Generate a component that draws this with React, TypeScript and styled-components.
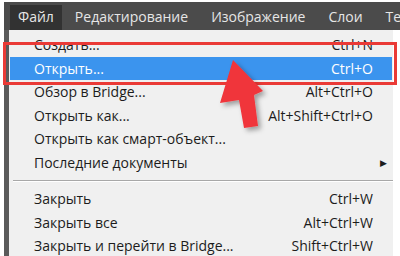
import { FunctionComponent } from "react";
import styled, { createGlobalStyle } from "styled-components";

type Entry =
  | { kind: "item"; label: string; shortcut?: string; submenu?: boolean; active?: boolean }
  | { kind: "separator" };

const menuTitles = ["Файл", "Редактирование", "Изображение", "Слои", "Текст"];

const entries: Entry[] = [
  { kind: "item", label: "Создать...", shortcut: "Ctrl+N" },
  { kind: "item", label: "Открыть...", shortcut: "Ctrl+O", active: true },
  { kind: "item", label: "Обзор в Bridge...", shortcut: "Alt+Ctrl+O" },
  { kind: "item", label: "Открыть как...", shortcut: "Alt+Shift+Ctrl+O" },
  { kind: "item", label: "Открыть как смарт-объект..." },
  { kind: "item", label: "Последние документы", submenu: true },
  { kind: "separator" },
  { kind: "item", label: "Закрыть", shortcut: "Ctrl+W" },
  { kind: "item", label: "Закрыть все", shortcut: "Alt+Ctrl+W" },
  { kind: "item", label: "Закрыть и перейти в Bridge...", shortcut: "Shift+Ctrl+W" },
];

const App: FunctionComponent = () => {
  return (
    <>
      <GlobalStyle />
      <Screen>
        <MenuBar>
          {menuTitles.map((t, i) => (
            <MenuTitle key={t} open={i === 0}>{t}</MenuTitle>
          ))}
        </MenuBar>
        <Dropdown>
          {entries.map((e, i) =>
            e.kind === "separator" ? (
              <Separator key={i} />
            ) : (
              <Row key={i} active={e.active}>
                <Label>{e.label}</Label>
                <Shortcut>{e.shortcut}</Shortcut>
                <SubArrow>{e.submenu ? "▶" : ""}</SubArrow>
              </Row>
            )
          )}
        </Dropdown>
        <Highlight />
        {/* annotation arrow pointing at the "Открыть..." item */}
        <Pointer width="70" height="85" viewBox="0 0 70 85">
          <defs>
            <filter id="sh" x="-30%" y="-30%" width="160%" height="160%">
              <feDropShadow dx="3" dy="3" stdDeviation="2.5" floodColor="#000" floodOpacity="0.35" />
            </filter>
          </defs>
          <polygon
            points="25,2 55,33 46,37 50,68 36,70 31,42 12,45"
            fill="#f0353a"
            strokeLinejoin="round"
            filter="url(#sh)"
          />
        </Pointer>
      </Screen>
    </>
  );
};

const GlobalStyle = createGlobalStyle`
  html, body {
    margin: 0;
    padding: 0;
    background: #ffffff;
  }
`;

const Screen = styled.div`
  position: relative;
  width: 400px;
  height: 256px;
  overflow: hidden;
  background: #ffffff;
  padding: 2px 0 0 4px;
  box-sizing: border-box;
  font-family: "Open Sans", "Noto Sans", sans-serif;
`;

const MenuBar = styled.div`
  display: flex;
  align-items: flex-end;
  height: 28px;
  background: #4b4b4b;
  padding-left: 6px;
  white-space: nowrap;
`;

const MenuTitle = styled.div<{ open?: boolean }>`
  height: 25px;
  line-height: 24px;
  padding: 0 8px;
  margin-right: ${({ open }) => (open ? "5px" : "7px")};
  font-size: 14px;
  color: #e6e6e6;
  background: ${({ open }) => (open ? "#323232" : "transparent")};
`;

const Dropdown = styled.div`
  width: 389px;
  height: 230px;
  background: #f0f0f0;
  border-left: 5px solid #5a5a5a;
  box-sizing: border-box;
  padding-top: 3px;
`;

const Row = styled.div<{ active?: boolean }>`
  display: grid;
  grid-template-columns: 1fr auto 19px;
  align-items: center;
  height: 23.5px;
  margin: 0 1px;
  padding-left: 24px;
  font-size: 14px;
  color: ${({ active }) => (active ? "#ffffff" : "#1c1c1c")};
  background: ${({ active }) => (active ? "#3b94ee" : "transparent")};
  white-space: nowrap;
`;

const Label = styled.span``;

const Shortcut = styled.span`
  text-align: right;
`;

const SubArrow = styled.span`
  font-size: 9px;
  text-align: center;
  padding-left: 2px;
`;

const Separator = styled.div`
  height: 13px;
  margin: 0 0 0 4px;
  display: flex;
  align-items: center;
  &::after {
    content: "";
    flex: 1;
    height: 1px;
    background: #a8a8a8;
    box-shadow: 0 1px 0 #ffffff;
  }
`;

const Highlight = styled.div`
  position: absolute;
  left: 3px;
  top: 42px;
  width: 394px;
  height: 43px;
  border: 3px solid #ea3a36;
  box-sizing: border-box;
`;

const Pointer = styled.svg`
  position: absolute;
  left: 208px;
  top: 58px;
`;

export default App;
